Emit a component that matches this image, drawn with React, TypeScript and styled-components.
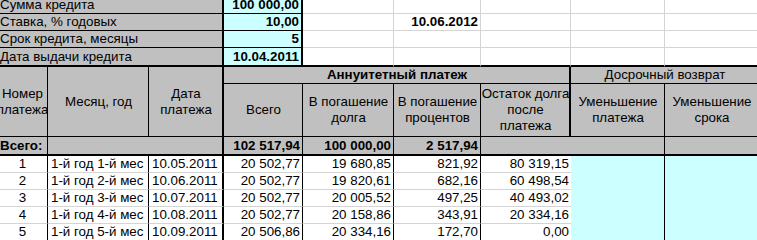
import React from "react";
import styled, { createGlobalStyle } from "styled-components";

const GlobalStyle = createGlobalStyle`
  html, body {
    margin: 0;
    padding: 0;
    background: #fff;
    overflow: hidden;
  }
  body {
    font-family: "Liberation Sans", Arial, sans-serif;
    font-size: 13.33px;
    color: #000;
  }
`;

type Line = "none" | "grid" | "thin" | "thick";
type Fill = "white" | "grey" | "cyan";
type Align = "left" | "center" | "right";

const lineCss = (l: Line) =>
  l === "none"
    ? "none"
    : l === "grid"
    ? "1px solid #d4d4d4"
    : l === "thin"
    ? "1px solid #000"
    : "2px solid #000";

const fills: Record<Fill, string> = {
  white: "#ffffff",
  grey: "#c0c0c0",
  cyan: "#ccffff",
};

const justify: Record<Align, string> = {
  left: "flex-start",
  center: "center",
  right: "flex-end",
};

// the visible part of the sheet, scrolled a few pixels right/down
const Sheet = styled.div`
  display: grid;
  grid-template-columns: 51px 101px 75px 79px 91px 87px 90px 94px 93px;
  grid-template-rows: 17px 17px 17px 19px 17px 53px 19px repeat(5, 17px);
  margin: -3px 0 0 -3px;
  width: max-content;
`;

const Cell = styled.div<{
  $fill?: Fill;
  $align?: Align;
  $bold?: boolean;
  $middle?: boolean;
  $right?: Line;
  $bottom?: Line;
  $span?: number;
  $rows?: number;
}>`
  box-sizing: border-box;
  display: flex;
  align-items: ${({ $middle }) => ($middle ? "center" : "flex-end")};
  justify-content: ${({ $align = "left" }) => justify[$align]};
  text-align: ${({ $align = "left" }) => $align};
  padding: 0 2px 0 3px;
  grid-column: span ${({ $span = 1 }) => $span};
  grid-row: span ${({ $rows = 1 }) => $rows};
  background: ${({ $fill = "white" }) => fills[$fill]};
  border-right: ${({ $right = "grid" }) => lineCss($right)};
  border-bottom: ${({ $bottom = "grid" }) => lineCss($bottom)};
  font-weight: ${({ $bold }) => ($bold ? 700 : 400)};
  line-height: 16px;
  white-space: nowrap;
  overflow: hidden;
`;

const HeadText = styled.span`
  display: block;
  text-align: center;
`;

const loanRows = [
  { label: "Сумма кредита", value: "100 000,00", extra: "" },
  { label: "Ставка, % годовых", value: "10,00", extra: "10.06.2012" },
  { label: "Срок кредита, месяцы", value: "5", extra: "" },
  { label: "Дата выдачи кредита", value: "10.04.2011", extra: "" },
];

const payments = [
  ["1", "1-й год 1-й мес", "10.05.2011", "20 502,77", "19 680,85", "821,92", "80 319,15"],
  ["2", "1-й год 2-й мес", "10.06.2011", "20 502,77", "19 820,61", "682,16", "60 498,54"],
  ["3", "1-й год 3-й мес", "10.07.2011", "20 502,77", "20 005,52", "497,25", "40 493,02"],
  ["4", "1-й год 4-й мес", "10.08.2011", "20 502,77", "20 158,86", "343,91", "20 334,16"],
  ["5", "1-й год 5-й мес", "10.09.2011", "20 506,86", "20 334,16", "172,70", "0,00"],
];

function Lines({ children }: { children: string[] }) {
  return (
    <HeadText>
      {children.map((t, i) => (
        <React.Fragment key={i}>
          {i > 0 && <br />}
          {t}
        </React.Fragment>
      ))}
    </HeadText>
  );
}

export default function App() {
  return (
    <>
      <GlobalStyle />
      <Sheet>
        {loanRows.map((r, i) => {
          const last = i === loanRows.length - 1;
          const bottom: Line = last ? "thick" : "thin";
          const gridBottom: Line = last ? "thick" : "grid";
          return (
            <React.Fragment key={r.label}>
              <Cell $span={3} $fill="grey" $right="thick" $bottom={bottom}>
                {r.label}
              </Cell>
              <Cell $fill="cyan" $align="right" $bold $right="thick" $bottom={bottom}>
                {r.value}
              </Cell>
              <Cell $bottom={gridBottom} />
              <Cell $align="right" $bold $bottom={gridBottom}>
                {r.extra}
              </Cell>
              <Cell $bottom={gridBottom} />
              <Cell $bottom={gridBottom} />
              <Cell $bottom={gridBottom} $right="none" />
            </React.Fragment>
          );
        })}

        <Cell $rows={2} $fill="grey" $align="center" $middle $right="thin" $bottom="thin">
          <Lines>{["Номер", "платежа"]}</Lines>
        </Cell>
        <Cell $rows={2} $fill="grey" $align="center" $middle $right="thin" $bottom="thin">
          Месяц, год
        </Cell>
        <Cell $rows={2} $fill="grey" $align="center" $middle $right="thick" $bottom="thin">
          <Lines>{["Дата", "платежа"]}</Lines>
        </Cell>
        <Cell $span={4} $fill="grey" $align="center" $bold $right="thick" $bottom="thin">
          Аннуитетный платеж
        </Cell>
        <Cell $span={2} $fill="grey" $align="center" $right="none" $bottom="thin">
          Досрочный возврат
        </Cell>

        <Cell $fill="grey" $align="center" $middle $right="thin" $bottom="thin">
          Всего
        </Cell>
        <Cell $fill="grey" $align="center" $middle $right="thin" $bottom="thin">
          <Lines>{["В погашение", "долга"]}</Lines>
        </Cell>
        <Cell $fill="grey" $align="center" $middle $right="thin" $bottom="thin">
          <Lines>{["В погашение", "процентов"]}</Lines>
        </Cell>
        <Cell $fill="grey" $align="center" $middle $right="thick" $bottom="thin">
          <Lines>{["Остаток долга", "после", "платежа"]}</Lines>
        </Cell>
        <Cell $fill="grey" $align="center" $middle $right="thin" $bottom="thin">
          <Lines>{["Уменьшение", "платежа"]}</Lines>
        </Cell>
        <Cell $fill="grey" $align="center" $middle $right="none" $bottom="thin">
          <Lines>{["Уменьшение", "срока"]}</Lines>
        </Cell>

        <Cell $fill="grey" $bold $right="thin" $bottom="thick">
          Всего:
        </Cell>
        <Cell $span={2} $fill="grey" $right="thick" $bottom="thick" />
        <Cell $fill="grey" $align="right" $bold $right="thin" $bottom="thick">
          102 517,94
        </Cell>
        <Cell $fill="grey" $align="right" $bold $right="thin" $bottom="thick">
          100 000,00
        </Cell>
        <Cell $fill="grey" $align="right" $bold $right="thin" $bottom="thick">
          2 517,94
        </Cell>
        <Cell $span={2} $fill="grey" $right="thin" $bottom="thick" />
        <Cell $fill="grey" $right="none" $bottom="thick" />

        {payments.map((p) => (
          <React.Fragment key={p[0]}>
            <Cell $align="center" $right="thin">{p[0]}</Cell>
            <Cell $right="thin">{p[1]}</Cell>
            <Cell $right="thick">{p[2]}</Cell>
            <Cell $align="right" $right="thin">{p[3]}</Cell>
            <Cell $align="right" $right="thin">{p[4]}</Cell>
            <Cell $align="right" $right="thin">{p[5]}</Cell>
            <Cell $align="right" $right="none">{p[6]}</Cell>
            <Cell $fill="cyan" $right="thin" $bottom="none" />
            <Cell $fill="cyan" $right="none" $bottom="none" />
          </React.Fragment>
        ))}
      </Sheet>
    </>
  );
}
